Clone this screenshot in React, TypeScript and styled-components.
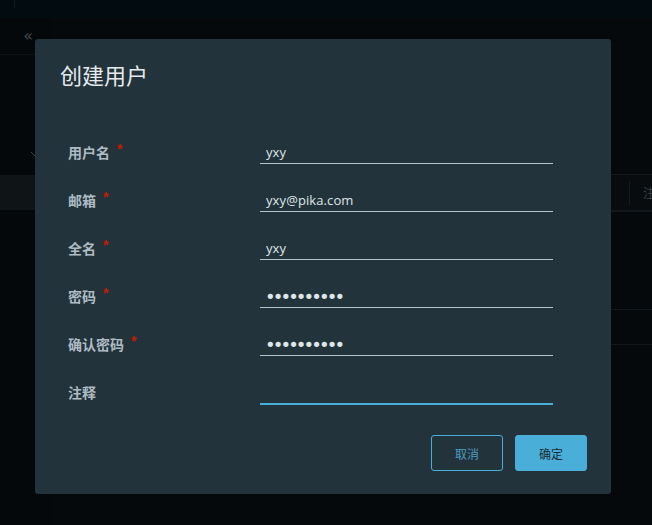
import React from "react";
import styled, { createGlobalStyle } from "styled-components";

const Global = createGlobalStyle`
  html, body { margin: 0; padding: 0; }
  body {
    width: 652px; height: 525px; overflow: hidden;
    background: #06090c;
    font-family: "Open Sans", "Noto Sans CJK SC", sans-serif;
  }
`;

const Page = styled.div`
  position: relative;
  width: 652px;
  height: 525px;
  overflow: hidden;
  display: flex;
  flex-direction: column;
  background: #06090c;
`;

const Header = styled.div`
  height: 18px;
  flex: none;
  background: #020b10;
  display: flex;
`;

const HeaderTick = styled.div`
  margin-left: 14px;
  width: 1px;
  height: 8px;
  background: #0f1c24;
`;

const Body = styled.div`
  flex: 1;
  display: flex;
`;

const Sidebar = styled.div`
  width: 52px;
  flex: none;
  background: #05080a;
  display: flex;
  flex-direction: column;
`;

const SideTop = styled.div`
  height: 36px;
  border-bottom: 1px solid #0d1215;
  display: flex;
  justify-content: flex-end;
  align-items: center;
  padding-right: 19px;
  color: #40484d;
  font-family: "DejaVu Sans", sans-serif;
  font-size: 16px;
  line-height: 1;
`;

const SideGroup = styled.div`
  height: 120px;
  display: flex;
  align-items: flex-end;
  padding-left: 30px;
  padding-bottom: 18px;
  box-sizing: border-box;
`;

const SideActive = styled.div`
  height: 35px;
  width: 52px;
  background: #0f1417;
`;

const Main = styled.div`
  flex: 1;
  display: flex;
  flex-direction: column;
  padding-top: 156px;
  min-width: 0;
`;

const TableHead = styled.div`
  height: 35px;
  border-top: 1px solid #12181b;
  border-bottom: 2px solid #12181b;
  background: #080c0f;
  display: flex;
  justify-content: flex-end;
  align-items: center;
  overflow: hidden;
`;

const HeadSep = styled.div`
  width: 1px;
  height: 24px;
  flex: none;
  background: #151c20;
  margin-right: 13px;
`;

const HeadText = styled.span`
  color: #3a4145;
  font-family: "Noto Sans CJK SC", sans-serif;
  font-size: 12px;
  white-space: nowrap;
  flex: none;
  width: 9px;
`;

const TableRow = styled.div<{ $h: number }>`
  height: ${(p) => p.$h}px;
  border-bottom: 1px solid #12181b;
`;

const Modal = styled.div`
  position: absolute;
  left: 35px;
  top: 39px;
  width: 576px;
  height: 455px;
  box-sizing: border-box;
  background: #22333b;
  border-radius: 3px;
  padding: 21px 24px 23px 24px;
  display: flex;
  flex-direction: column;
`;

const Title = styled.h3`
  margin: 0;
  font-family: "Noto Sans CJK SC", sans-serif;
  font-weight: 400;
  font-size: 22px;
  line-height: 28px;
  color: #e6eaec;
  padding-left: 1px;
`;

const Form = styled.form`
  margin-top: 40px;
  padding-left: 9px;
  display: flex;
  flex-direction: column;
`;

const Row = styled.div`
  height: 48px;
  display: grid;
  grid-template-columns: 192px 293px;
  align-items: center;
`;

const Label = styled.label`
  font-family: "Noto Sans CJK SC", sans-serif;
  font-weight: 700;
  font-size: 14px;
  line-height: 20px;
  color: #aebbc3;
  display: flex;
  align-items: center;
`;

const Req = styled.span`
  color: #c21d00;
  font-size: 14px;
  margin-left: 7px;
  margin-top: -6px;
  font-family: "Liberation Sans", sans-serif;
  font-weight: 700;
`;

const Input = styled.input<{ $focus?: boolean }>`
  height: 24px;
  box-sizing: border-box;
  width: 100%;
  background: transparent;
  border: none;
  border-bottom: ${(p) => (p.$focus ? "2px solid #49afd9" : "1px solid #b7c3c9")};
  outline: none;
  padding: 0 6px;
  margin-top: ${(p) => (p.$focus ? "1px" : "0")};
  color: #dfe5e8;
  font-family: "Open Sans", sans-serif;
  font-size: 13px;
  letter-spacing: 0.1px;

  &[type="password"] {
    font-family: "DejaVu Sans", sans-serif;
    font-size: 18px;
    letter-spacing: -2.9px;
    padding-left: 5px;
    padding-top: 1px;
  }
`;

const Footer = styled.div`
  margin-top: auto;
  display: flex;
  justify-content: flex-end;
  gap: 12px;
`;

const Button = styled.button<{ $primary?: boolean }>`
  width: 72px;
  height: 36px;
  box-sizing: border-box;
  border-radius: 3px;
  border: 1px solid #49afd9;
  background: ${(p) => (p.$primary ? "#49afd9" : "transparent")};
  color: ${(p) => (p.$primary ? "#1b2a32" : "#4c9cc2")};
  font-family: "Noto Sans CJK SC", sans-serif;
  font-size: 12px;
  cursor: pointer;
  padding: 0;
`;

const fields: { label: string; value: string; type?: string; req: boolean }[] = [
  { label: "用户名", value: "yxy", req: true },
  { label: "邮箱", value: "yxy@pika.com", req: true },
  { label: "全名", value: "yxy", req: true },
  { label: "密码", value: "1234567890", type: "password", req: true },
  { label: "确认密码", value: "1234567890", type: "password", req: true },
  { label: "注释", value: "", req: false },
];

export default function App() {
  return (
    <>
      <Global />
      <Page>
        <Header>
          <HeaderTick />
        </Header>
        <Body>
          <Sidebar>
            <SideTop>«</SideTop>
            <SideGroup>
              <svg width="10" height="6" viewBox="0 0 10 6">
                <path d="M1 1 L5 5 L9 1" stroke="#3a4247" fill="none" strokeWidth="1" />
              </svg>
            </SideGroup>
            <SideActive />
          </Sidebar>
          <Main>
            <TableHead>
              <HeadSep />
              <HeadText>注释</HeadText>
            </TableHead>
            <TableRow $h={97} />
            <TableRow $h={34} />
          </Main>
        </Body>
        <Modal>
          <Title>创建用户</Title>
          <Form>
            {fields.map((f, i) => (
              <Row key={f.label}>
                <Label>
                  {f.label}
                  {f.req && <Req>*</Req>}
                </Label>
                <Input
                  type={f.type || "text"}
                  value={f.value}
                  readOnly
                  $focus={i === fields.length - 1}
                />
              </Row>
            ))}
          </Form>
          <Footer>
            <Button type="button">取消</Button>
            <Button type="button" $primary>
              确定
            </Button>
          </Footer>
        </Modal>
      </Page>
    </>
  );
}
